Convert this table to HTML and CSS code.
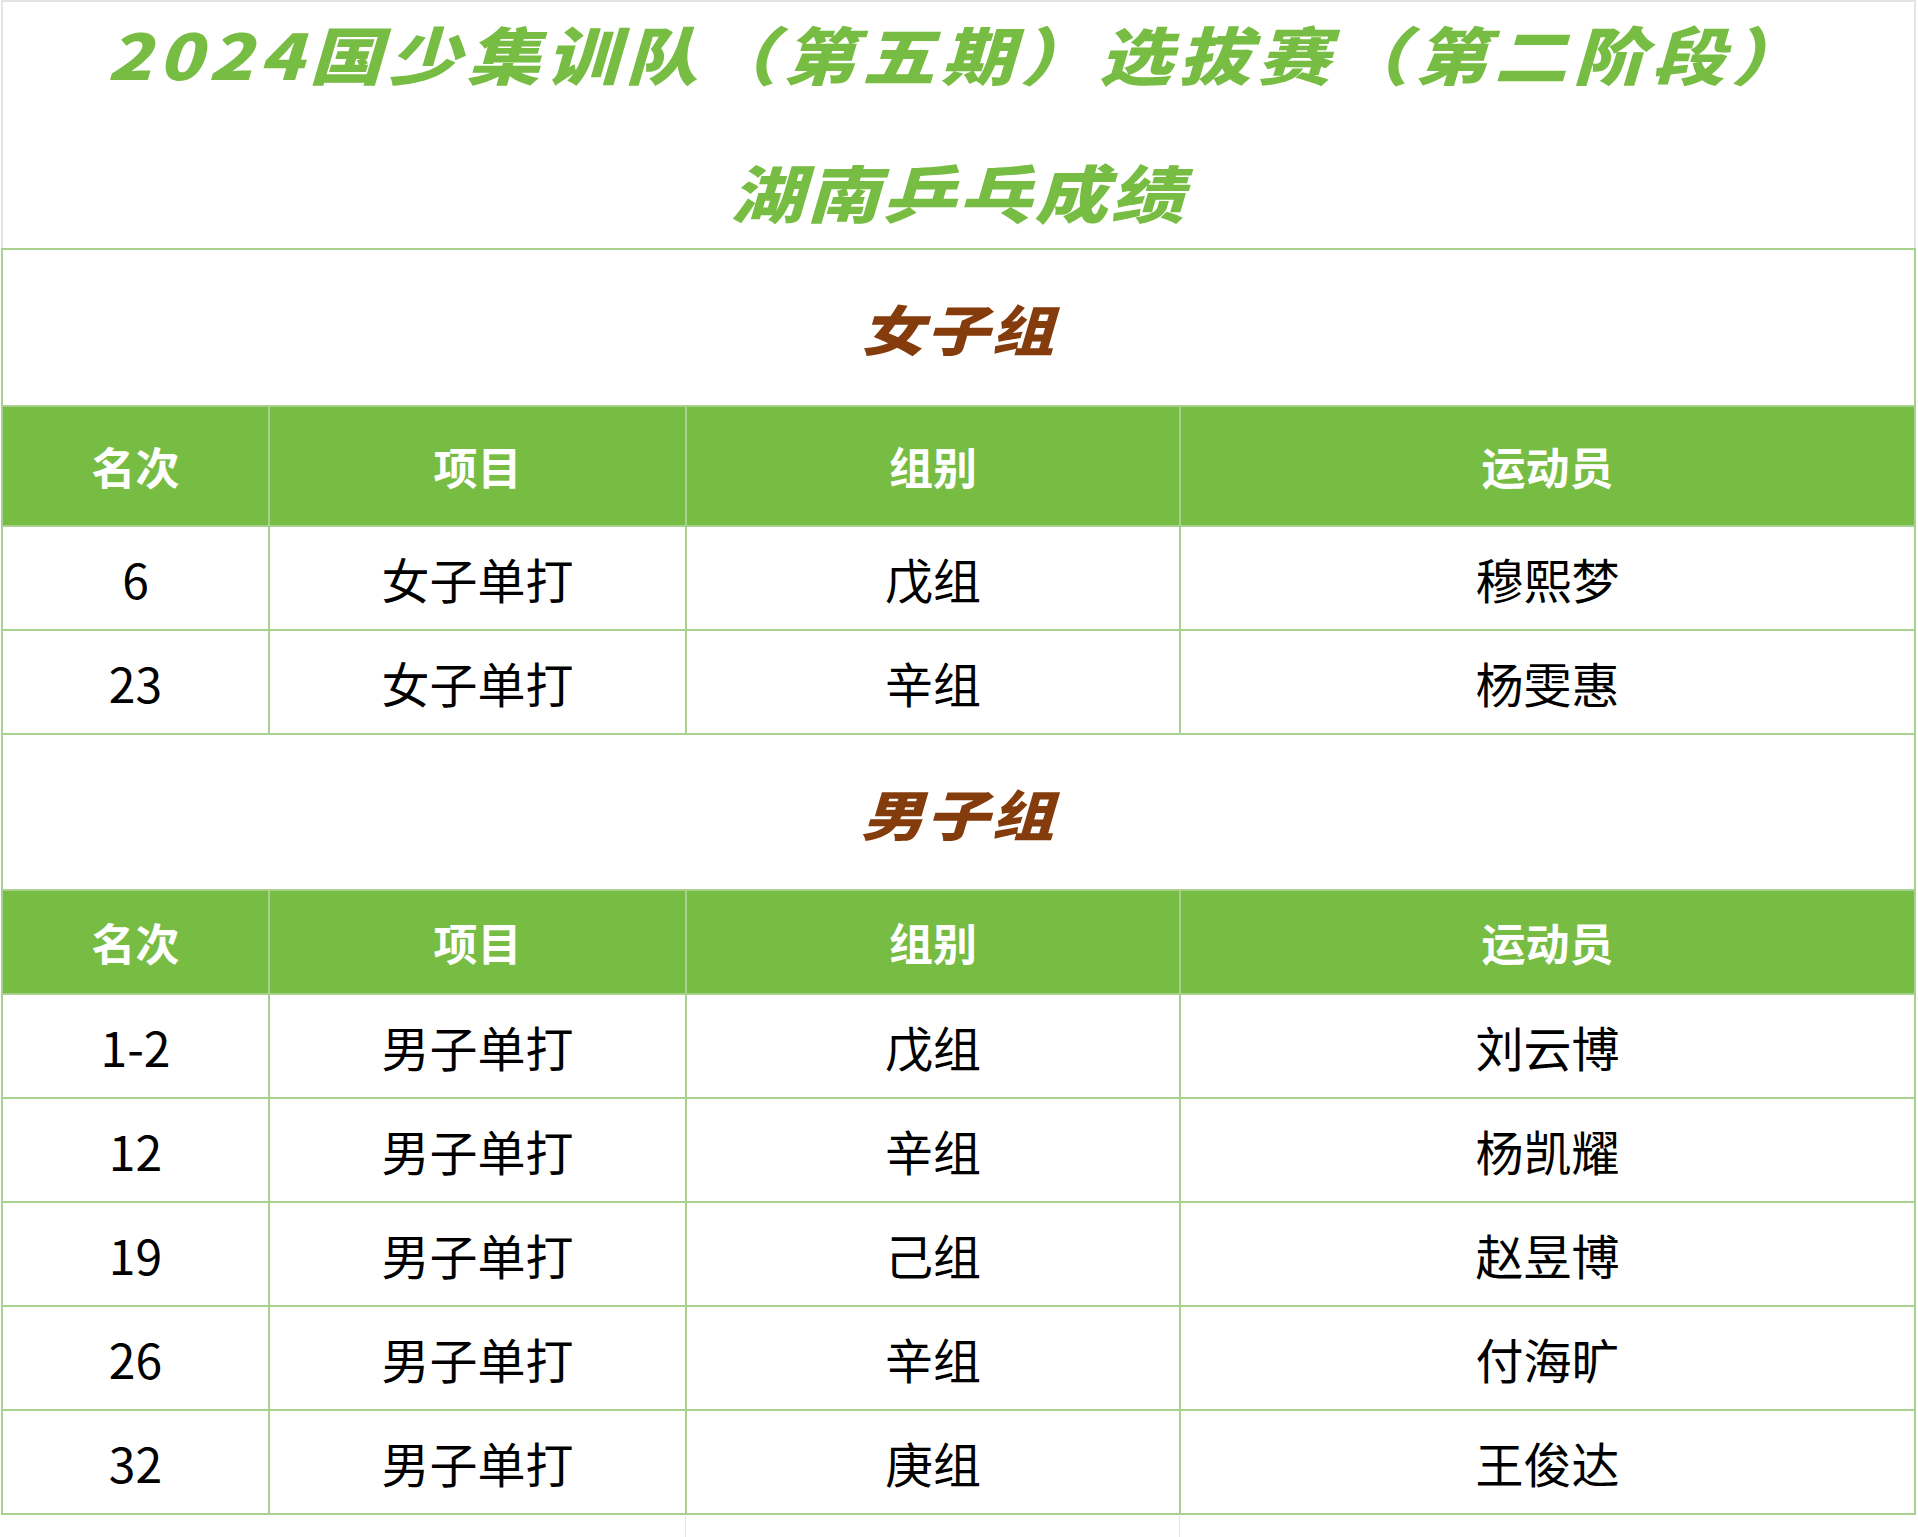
FILE: index.html
```html
<!DOCTYPE html>
<html lang="zh-CN">
<head>
<meta charset="utf-8">
<title>湖南乒乓成绩</title>
<link rel="stylesheet" href="styles.css">
</head>
<body>
<div class="sheet">
  <header class="title-box">
    <div class="title-line first"><span>2024国少集训队（第五期）选拔赛（第二阶段）</span></div>
    <div class="title-line second"><span>湖南乒乓成绩</span></div>
  </header>
  <main class="grid">
    <div class="section women"><span>女子组</span></div>
    <div class="head">名次</div><div class="head">项目</div><div class="head">组别</div><div class="head">运动员</div>
    <div class="cell">6</div><div class="cell">女子单打</div><div class="cell">戊组</div><div class="cell">穆熙梦</div>
    <div class="cell">23</div><div class="cell">女子单打</div><div class="cell">辛组</div><div class="cell">杨雯惠</div>
    <div class="section men"><span>男子组</span></div>
    <div class="head">名次</div><div class="head">项目</div><div class="head">组别</div><div class="head">运动员</div>
    <div class="cell">1-2</div><div class="cell">男子单打</div><div class="cell">戊组</div><div class="cell">刘云博</div>
    <div class="cell">12</div><div class="cell">男子单打</div><div class="cell">辛组</div><div class="cell">杨凯耀</div>
    <div class="cell">19</div><div class="cell">男子单打</div><div class="cell">己组</div><div class="cell">赵昱博</div>
    <div class="cell">26</div><div class="cell">男子单打</div><div class="cell">辛组</div><div class="cell">付海旷</div>
    <div class="cell">32</div><div class="cell">男子单打</div><div class="cell">庚组</div><div class="cell">王俊达</div>
  </main>
  <div class="gridlines">
    <div></div><div></div><div class="gl"></div><div class="gl"></div>
  </div>
</div>
</body>
</html>
```
FILE: styles.css
```css
html, body {
  margin: 0;
  padding: 0;
  background: #ffffff;
}
body {
  font-family: "Noto Sans CJK SC", "Microsoft YaHei", sans-serif;
  color: #000;
}
.sheet {
  width: 1915px;
  margin-left: 1px;
}
.title-box {
  height: 248px;
  box-sizing: border-box;
  border: 2px solid #e4e4e4;
  border-bottom: none;
  display: flex;
  flex-direction: column;
}
.title-line {
  display: flex;
  justify-content: center;
  align-items: center;
  color: #77bc43;
  font-weight: 900;
  font-style: italic;
  font-size: 73px;
  white-space: nowrap;
}
.title-line span {
  display: inline-block;
  transform: scaleY(0.86);
}
.title-line.first {
  height: 100px;
  letter-spacing: 6px;
}
.title-line.second {
  height: 100px;
  margin-top: 38px;
  letter-spacing: 3px;
}
.grid {
  display: grid;
  grid-template-columns: 265px 415px 492px 733px;
  grid-template-rows: 155px 118px 102px 102px 154px 102px 102px 102px 102px 102px 102px;
  gap: 2px;
  padding: 2px;
  background: #a9d18e;
}
.grid > div {
  display: flex;
  align-items: center;
  justify-content: center;
  background: #fff;
}
.section {
  grid-column: 1 / -1;
  color: #843c0c;
  font-weight: 900;
  font-style: italic;
  font-size: 63px;
  letter-spacing: 2px;
}
.section span {
  display: inline-block;
  transform: scaleY(0.86);
}
.grid > .head {
  background: #77bc43;
  color: #fff;
  font-weight: 700;
  font-size: 44px;
}
.cell {
  font-size: 48px;
  font-weight: 400;
}
.gridlines {
  display: grid;
  grid-template-columns: 267px 417px 494px 735px;
  height: 22px;
}
.gridlines .gl {
  border-left: 1px solid #e6e6e6;
}
```
